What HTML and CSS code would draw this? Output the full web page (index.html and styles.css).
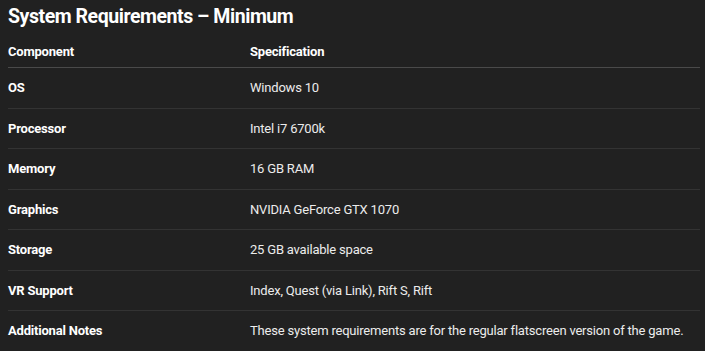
FILE: index.html
```html
<!DOCTYPE html>
<html lang="en">
<head>
<meta charset="utf-8">
<title>System Requirements</title>
<link rel="stylesheet" href="styles.css">
</head>
<body>
<main class="page">
  <h2 class="title">System Requirements – Minimum</h2>
  <table class="req">
    <thead>
      <tr><th>Component</th><th>Specification</th></tr>
    </thead>
    <tbody>
      <tr><td class="key">OS</td><td>Windows 10</td></tr>
      <tr><td class="key">Processor</td><td>Intel i7 6700k</td></tr>
      <tr><td class="key">Memory</td><td>16 GB RAM</td></tr>
      <tr><td class="key">Graphics</td><td>NVIDIA GeForce GTX 1070</td></tr>
      <tr><td class="key">Storage</td><td>25 GB available space</td></tr>
      <tr><td class="key">VR Support</td><td>Index, Quest (via Link), Rift S, Rift</td></tr>
      <tr><td class="key">Additional Notes</td><td>These system requirements are for the regular flatscreen version of the game.</td></tr>
    </tbody>
  </table>
</main>
</body>
</html>
```

FILE: styles.css
```css
html, body {
  margin: 0;
  background: #212121;
}
body {
  font-family: Roboto, "Liberation Sans", sans-serif;
  color: #ececec;
}
.page {
  padding: 4px 5px 0 8px;
}
.title {
  margin: 0 0 6px;
  font-size: 19.5px;
  line-height: 26px;
  font-weight: 700;
  letter-spacing: -0.45px;
  color: #ffffff;
}
.req {
  width: 100%;
  border-collapse: collapse;
  font-size: 13px;
  letter-spacing: -0.2px;
}
.req th {
  text-align: left;
  font-weight: 700;
  color: #ffffff;
  padding: 6px 0 5px;
  line-height: 20px;
  border-bottom: 1px solid #4a4a4a;
}
.req th:first-child, .req td:first-child {
  width: 242px;
}
.req td {
  padding: 10px 0;
  line-height: 19.5px;
  border-bottom: 1px solid #333333;
}
.req tbody tr:last-child td {
  border-bottom: none;
}
.req td.key {
  font-weight: 700;
  color: #ffffff;
}
```
